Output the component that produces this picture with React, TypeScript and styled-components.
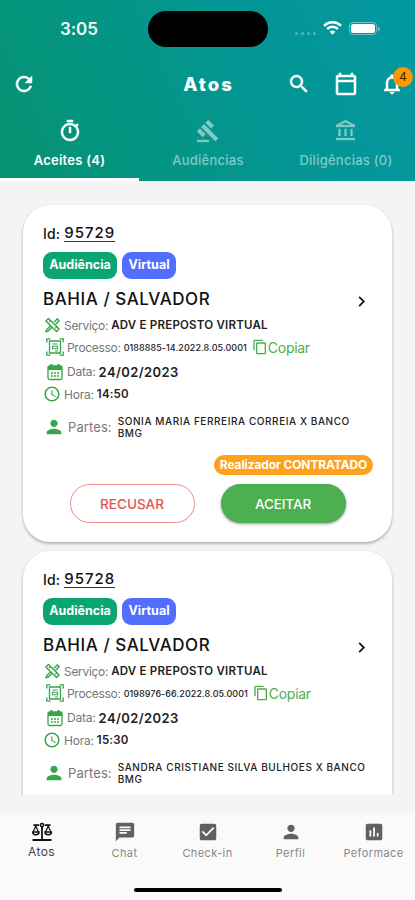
import React from "react";
import styled, { createGlobalStyle } from "styled-components";
import {
  MdRefresh, MdSearch, MdOutlineCalendarToday, MdNotificationsNone, MdOutlineTimer, MdGavel,
  MdOutlineAccountBalance, MdChat, MdCheckBox, MdPerson, MdAssessment, MdContentCopy,
  MdChevronRight, MdAccessTime,
} from "react-icons/md";

const GlobalStyle = createGlobalStyle`
  * { box-sizing: border-box; }
  body { margin: 0; background: #f4f4f4; font-family: Inter, "Liberation Sans", sans-serif; }
`;

const Screen = styled.div`
  width: 415px;
  height: 900px;
  display: flex;
  flex-direction: column;
  overflow: hidden;
  background: #f4f4f4;
  color: #111;
`;

const Header = styled.header`
  height: 181px;
  flex: none;
  background: linear-gradient(65deg, #04936f 0%, #049585 35%, #039696 65%, #0398a2 100%);
  color: #fff;
`;

const StatusBar = styled.div`
  height: 58px;
  display: grid;
  grid-template-columns: 148px 120px 1fr;
  align-items: center;
`;

const Clock = styled.div`
  padding-left: 60px;
  font-size: 17px;
  font-weight: 600;
  line-height: 20px;
  letter-spacing: -0.1px;
  opacity: 0.95;
`;

const Island = styled.div`
  height: 36px;
  border-radius: 18px;
  background: #000;
`;

const StatusIcons = styled.div`
  display: flex;
  align-items: center;
  padding-left: 26px;
`;

const Dots = styled.div`
  display: flex;
  gap: 3px;
  width: 22px;
  padding: 8px 0 0 1px;
`;

const Dot = styled.i`
  width: 3px;
  height: 3px;
  border-radius: 50%;
  background: rgba(255, 255, 255, 0.3);
`;

const WifiSlot = styled.div`
  display: flex;
  margin: 0 0 2px 7px;
`;

const Battery = styled.div`
  display: flex;
  align-items: center;
  gap: 1px;
  margin: 0 0 1px 7px;
`;

const BatteryBody = styled.div`
  width: 28px;
  height: 13px;
  padding: 1px;
  border: 1px solid rgba(255, 255, 255, 0.42);
  border-radius: 4px;
`;

const BatteryFill = styled.div`
  height: 100%;
  border-radius: 2.5px;
  background: #fff;
`;

const BatteryTip = styled.div`
  width: 2px;
  height: 4px;
  border-radius: 0 2px 2px 0;
  background: rgba(255, 255, 255, 0.45);
`;

const AppBar = styled.div`
  height: 52px;
  display: grid;
  grid-template-columns: 148px 121px 1fr;
  align-items: center;
  svg { stroke: none; }
  svg path:not([fill="none"]) { stroke: currentColor; stroke-width: 0.5px; }
`;

const RefreshButton = styled.div`
  display: flex;
  padding-left: 12px;
`;

const PageTitle = styled.h1`
  margin: 0;
  text-align: center;
  font-size: 18.5px;
  line-height: 24px;
  font-weight: 800;
  letter-spacing: 2px;
`;

const Actions = styled.div`
  display: flex;
  align-items: center;
  padding-left: 18px;
  gap: 23px;
`;

const Bell = styled.div`
  position: relative;
  display: flex;
  margin-left: -1px;
`;

const BellCount = styled.span`
  position: absolute;
  left: 13px;
  top: -5px;
  width: 20px;
  height: 20px;
  border-radius: 50%;
  background: #ff9800;
  color: #3a2a08;
  font-size: 12px;
  line-height: 20px;
  text-align: center;
`;

const Tabs = styled.nav`
  display: grid;
  grid-template-columns: 139px 138px 138px;
  height: 71px;
`;

const Tab = styled.div<{ $active?: boolean }>`
  display: flex;
  flex-direction: column;
  align-items: center;
  padding-top: 9px;
  font-size: 13px;
  line-height: 18px;
  font-weight: ${(p) => (p.$active ? 600 : 500)};
  letter-spacing: 0.25px;
  white-space: nowrap;
  color: ${(p) => (p.$active ? "#fff" : "#80cac8")};
  border-bottom: ${(p) => (p.$active ? "3px solid #fff" : "0")};
  svg { flex: none; margin-bottom: 8px; stroke: none; }
  svg path:not([fill="none"]) { stroke: currentColor; stroke-width: ${(p) => (p.$active ? 0.5 : 0.3)}px; }
`;

const List = styled.main`
  height: 613px;
  margin-top: 1px;
  padding: 23px 23px 0;
  overflow: hidden;
  flex: none;
`;

const Card = styled.article`
  height: 337px;
  margin-bottom: 9px;
  padding: 17px 20px 0;
  border-radius: 27px;
  background: #fff;
  box-shadow: 0 2px 3px rgba(0, 0, 0, 0.25), 0 0 2px rgba(0, 0, 0, 0.08);
`;

const IdRow = styled.div`
  height: 22px;
  display: flex;
  align-items: center;
  gap: 4px;
  font-size: 14px;
  font-weight: 500;
  letter-spacing: 0.2px;
`;

const IdLink = styled.span`
  font-size: 15px;
  letter-spacing: 1px;
  line-height: 17px;
  border-bottom: 1px solid #333;
`;

const Chips = styled.div`
  display: flex;
  gap: 5px;
  margin-top: 8px;
`;

const Chip = styled.span<{ $color: string; $width: number }>`
  width: ${(p) => p.$width}px;
  height: 27px;
  border-radius: 9px;
  background: ${(p) => p.$color};
  color: #fff;
  font-size: 12.5px;
  font-weight: 700;
  line-height: 26px;
  text-align: center;
`;

const TitleRow = styled.div`
  height: 30px;
  margin-top: 5px;
  display: flex;
  align-items: center;
  justify-content: space-between;
  font-size: 17px;
  font-weight: 500;
  letter-spacing: 0.55px;
  svg { margin-top: 5px; }
`;

const Line = styled.div<{ $indent?: number; $top?: number; $height?: number }>`
  display: flex;
  align-items: center;
  height: ${(p) => p.$height ?? 22}px;
  margin-top: ${(p) => p.$top ?? 0}px;
  padding-left: ${(p) => p.$indent ?? 0}px;
  color: #39a54a;
  white-space: nowrap;
  svg { flex: none; }
`;

const Label = styled.span<{ $size?: number; $spacing?: number }>`
  margin: 0 3px;
  color: #777;
  font-size: ${(p) => p.$size ?? 12}px;
  letter-spacing: ${(p) => p.$spacing ?? -0.2}px;
`;

const Value = styled.span<{ $size: number; $spacing?: number; $weight?: number }>`
  color: #222;
  font-size: ${(p) => p.$size}px;
  font-weight: ${(p) => p.$weight ?? 600};
  letter-spacing: ${(p) => p.$spacing ?? 0}px;
`;

const Copy = styled.span`
  display: flex;
  align-items: center;
  margin-left: 5px;
  font-size: 14px;
  letter-spacing: -0.3px;
  color: #4cae50;
`;

const Parties = styled.span`
  margin-left: 3px;
  width: 254px;
  white-space: normal;
  color: #222;
  font-size: 10px;
  line-height: 12px;
  font-weight: 500;
  letter-spacing: 0.57px;
`;

const Contracted = styled.div`
  width: 159px;
  height: 20px;
  margin: 10px -1px 0 auto;
  border-radius: 10px;
  background: #ffa11b;
  color: #fff;
  text-align: center;
  font-size: 12px;
  line-height: 19px;
  font-weight: 700;
  letter-spacing: -0.12px;
`;

const Buttons = styled.div`
  display: flex;
  justify-content: center;
  gap: 26px;
  margin-top: 9px;
`;

const Button = styled.button<{ $filled?: boolean }>`
  width: 125px;
  height: 39px;
  padding: 0;
  border-radius: 20px;
  border: ${(p) => (p.$filled ? "0" : "1px solid #ef8d88")};
  background: ${(p) => (p.$filled ? "#4caf50" : "#fff")};
  color: ${(p) => (p.$filled ? "#fff" : "#e5534d")};
  box-shadow: ${(p) => (p.$filled ? "0 1px 3px rgba(0,0,0,0.4)" : "none")};
  font: 500 13.5px Inter, sans-serif;
  letter-spacing: ${(p) => (p.$filled ? -0.1 : 0.05)}px;
`;

const BottomNav = styled.nav`
  display: grid;
  grid-template-columns: repeat(5, 83px);
  height: 75px;
  flex: none;
  margin-top: 18px;
  padding-top: 8px;
  background: #fafafa;
`;

const NavItem = styled.div<{ $active?: boolean }>`
  display: flex;
  flex-direction: column;
  align-items: center;
  font-size: ${(p) => (p.$active ? 12 : 11)}px;
  line-height: 16px;
  letter-spacing: 0.4px;
  color: ${(p) => (p.$active ? "#444" : "#888")};
  svg { color: ${(p) => (p.$active ? "#111" : "#616161")}; margin-bottom: ${(p) => (p.$active ? 1 : 2)}px; }
`;

const HomeArea = styled.div`
  flex: 1;
  background: #fafafa;
`;

const HomeBar = styled.div`
  width: 148px;
  height: 4px;
  margin: 0 auto;
  border-radius: 2px;
  background: #000;
`;

const WifiIcon = () => (
  <svg width="19" height="14" viewBox="0 0 19 14" fill="none" stroke="#fff" strokeWidth="2.5">
    <path d="M1 4.8a12.2 12.2 0 0 1 17 0" />
    <path d="M4.1 8a7.7 7.7 0 0 1 10.8 0" />
    <path d="M9.5 13.8 6.7 10.8a4 4 0 0 1 5.6 0Z" fill="#fff" stroke="none" />
  </svg>
);

const ToolsIcon = () => (
  <svg width="17" height="18" viewBox="0 0 18 18" fill="none" stroke="currentColor" strokeWidth="1.5" strokeLinejoin="round">
    <path d="M2 4.7 4.7 2 16 13.3 13.3 16Z" />
    <path d="M7.1 4.3 5.5 5.9M13.6 10.9 12 12.5" />
    <path d="M10.8 6 14 2.5 16 4.5 12.3 8.2M7 9.8 2.8 14 2 16.2 4.3 15.5 8.5 11.3" />
  </svg>
);

const ProcessIcon = () => (
  <svg width="18" height="18" viewBox="0 0 18 18" fill="none" stroke="currentColor" strokeWidth="1.3">
    <path d="M3.5 3h11v12h-11Z" />
    <path d="M.8 4.5V.8h3.7M13.5.8h3.7v3.7M17.2 13.5v3.7h-3.7M4.5 17.2H.8v-3.7" />
    <path d="M6.5 6h5M6.5 8.3h5v2.5h-5ZM9 13h3" strokeWidth="1.1" />
  </svg>
);

const DateIcon = () => (
  <svg width="18" height="18" viewBox="0 0 18 18" fill="none" stroke="currentColor">
    <rect x="2" y="3" width="14" height="13.5" rx="1.5" strokeWidth="1.3" />
    <path d="M2 5h14" strokeWidth="4" />
    <path d="M5.5 1v4M12.5 1v4" strokeWidth="2" />
    <path d="M5 10h2M8 10h2M11 10h2M5 13h2M8 13h2M11 13h2" strokeWidth="1.7" />
  </svg>
);

const ScaleIcon = () => (
  <svg width="22" height="22" viewBox="0 0 22 22" fill="none" stroke="currentColor" strokeWidth="1.5">
    <path d="M2.5 4.2h5.7M13.8 4.2h5.7M11 5.8v13M1.5 19h19" strokeWidth="1.8" />
    <circle cx="11" cy="4.1" r="1.6" strokeWidth="1.5" />
    <path d="M4.8 5 2.1 11M4.8 5 7.5 11M17.2 5 14.5 11M17.2 5 19.9 11" strokeWidth="1.2" />
    <path d="M1.6 11H8c0 3.7-6.4 3.7-6.4 0ZM14 11h6.4c0 3.7-6.4 3.7-6.4 0Z" />
  </svg>
);

interface Act {
  id: string;
  process: string;
  time: string;
  parties: string;
  open?: boolean;
}

const acts: Act[] = [
  { id: "95729", process: "0188885-14.2022.8.05.0001", time: "14:50", parties: "SONIA MARIA FERREIRA CORREIA X BANCO BMG", open: true },
  { id: "95728", process: "0198976-66.2022.8.05.0001", time: "15:30", parties: "SANDRA CRISTIANE SILVA BULHOES X BANCO BMG" },
];

const ActCard = ({ act }: { act: Act }) => (
  <Card>
    <IdRow>Id: <IdLink>{act.id}</IdLink></IdRow>
    <Chips>
      <Chip $color="#0ba572" $width={74}>Audiência</Chip>
      <Chip $color="#536dfe" $width={54}>Virtual</Chip>
    </Chips>
    <TitleRow>BAHIA / SALVADOR<MdChevronRight size={21} /></TitleRow>
    <Line $indent={1}>
      <ToolsIcon />
      <Label $spacing={-0.3}>Serviço:</Label>
      <Value $size={11.5} $spacing={0.22}>ADV E PREPOSTO VIRTUAL</Value>
    </Line>
    <Line $indent={3}>
      <ProcessIcon />
      <Label $spacing={-0.3}>Processo:</Label>
      <Value $size={9} $weight={500} $spacing={0.06}>{act.process}</Value>
      <Copy><MdContentCopy size={16} />Copiar</Copy>
    </Line>
    <Line $indent={3} $top={2} $height={23}>
      <DateIcon />
      <Label>Data:</Label>
      <Value $size={13} $spacing={0.4}>24/02/2023</Value>
    </Line>
    <Line>
      <MdAccessTime size={18} />
      <Label>Hora:</Label>
      <Value $size={11.5} $spacing={0.2}>{act.time}</Value>
    </Line>
    <Line $top={4} $height={36}>
      <MdPerson size={22} />
      <Label $size={13} $spacing={0.1}>Partes:</Label>
      <Parties>{act.parties}</Parties>
    </Line>
    {act.open && (
      <>
        <Contracted>Realizador CONTRATADO</Contracted>
        <Buttons>
          <Button>RECUSAR</Button>
          <Button $filled>ACEITAR</Button>
        </Buttons>
      </>
    )}
  </Card>
);

export default function App() {
  return (
    <Screen>
      <GlobalStyle />
      <Header>
        <StatusBar>
          <Clock>3:05</Clock>
          <Island />
          <StatusIcons>
            <Dots><Dot /><Dot /><Dot /><Dot /></Dots>
            <WifiSlot><WifiIcon /></WifiSlot>
            <Battery>
              <BatteryBody><BatteryFill /></BatteryBody>
              <BatteryTip />
            </Battery>
          </StatusIcons>
        </StatusBar>
        <AppBar>
          <RefreshButton><MdRefresh size={24} /></RefreshButton>
          <PageTitle>Atos</PageTitle>
          <Actions>
            <MdSearch size={24} />
            <MdOutlineCalendarToday size={24} />
            <Bell><MdNotificationsNone size={24} /><BellCount>4</BellCount></Bell>
          </Actions>
        </AppBar>
        <Tabs>
          <Tab $active><MdOutlineTimer size={24} />Aceites (4)</Tab>
          <Tab><MdGavel size={24} />Audiências</Tab>
          <Tab><MdOutlineAccountBalance size={24} />Diligências (0)</Tab>
        </Tabs>
      </Header>
      <List>
        {acts.map((act) => <ActCard key={act.id} act={act} />)}
      </List>
      <BottomNav>
        <NavItem $active><ScaleIcon />Atos</NavItem>
        <NavItem><MdChat size={22} />Chat</NavItem>
        <NavItem><MdCheckBox size={22} />Check-in</NavItem>
        <NavItem><MdPerson size={22} />Perfil</NavItem>
        <NavItem><MdAssessment size={22} />Peformace</NavItem>
      </BottomNav>
      <HomeArea><HomeBar /></HomeArea>
    </Screen>
  );
}
